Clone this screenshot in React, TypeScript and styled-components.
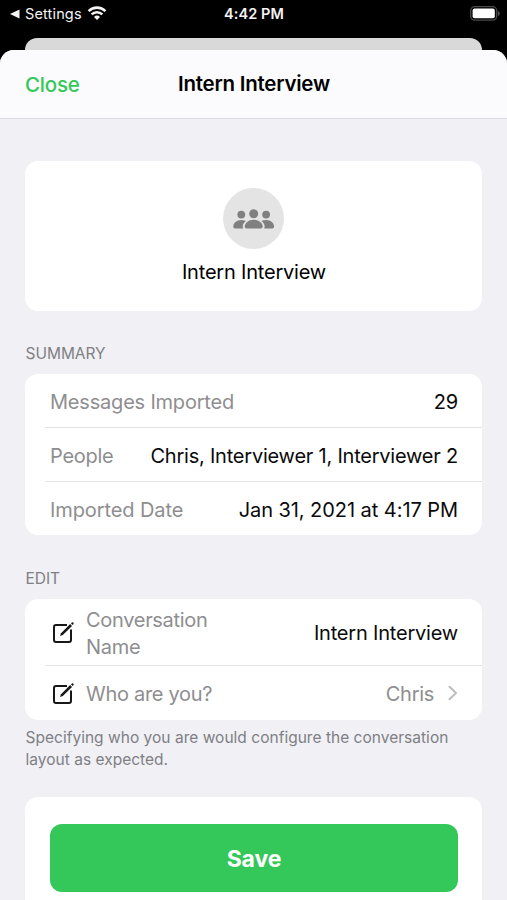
import React from "react";
import styled, { createGlobalStyle } from "styled-components";

const GlobalStyle = createGlobalStyle`
  * { box-sizing: border-box; }
  html, body { margin: 0; background: #000; overflow: hidden; }
  body { font-family: Inter, "Liberation Sans", sans-serif; }
`;

const Screen = styled.div`
  width: 507px;
  height: 900px;
  overflow: hidden;
  display: flex;
  flex-direction: column;
  background: #000;
`;

const StatusBar = styled.header`
  flex: none;
  height: 38px;
  padding: 0 7px 10px 10px;
  display: grid;
  grid-template-columns: 1fr auto 1fr;
  align-items: center;
  color: #f4f4f4;
`;

const BackLink = styled.div`
  display: flex;
  align-items: center;
  font-size: 14.5px;
  line-height: 28px;
  letter-spacing: 0.15px;
  svg:first-child { margin-right: 5px; }
  svg:last-child { margin-left: 5px; margin-top: -2px; }
`;

const Clock = styled.div`
  padding-right: 2px;
  font-size: 14.5px;
  font-weight: 600;
  line-height: 28px;
  letter-spacing: 0.1px;
`;

const BatterySlot = styled.div`
  display: flex;
  justify-content: flex-end;
  margin-top: -1px;
`;

const BackingCard = styled.div`
  flex: none;
  height: 12px;
  margin: 0 25px;
  border-radius: 12px 12px 0 0;
  background: #d9d9d9;
`;

const Sheet = styled.main`
  flex: 1;
  min-height: 0;
  overflow: hidden;
  border-radius: 14px 14px 0 0;
  background: #f0f0f5;
`;

const NavBar = styled.nav`
  height: 69px;
  padding: 0 24px 0 25px;
  display: grid;
  grid-template-columns: 1fr auto 1fr;
  align-items: center;
  background: #fbfbfd;
  border-bottom: 1px solid #dcdce0;
`;

const CloseButton = styled.button`
  justify-self: start;
  padding: 0;
  border: 0;
  background: none;
  color: #34c759;
  font: 500 20.5px Inter, sans-serif;
  letter-spacing: -0.2px;
`;

const Title = styled.h1`
  margin: 0;
  padding-bottom: 1px;
  font-size: 20.5px;
  font-weight: 600;
  letter-spacing: -0.24px;
`;

const Content = styled.div`
  padding: 42px 25px 0;
`;

const Card = styled.section`
  border-radius: 13px;
  background: #fff;
`;

const ProfileCard = styled(Card)`
  height: 150px;
  padding-top: 27px;
  display: flex;
  flex-direction: column;
  align-items: center;
`;

const Avatar = styled.div`
  width: 61px;
  height: 61px;
  border-radius: 50%;
  display: flex;
  align-items: center;
  justify-content: center;
  background: #e4e4e4;
`;

const ProfileName = styled.div`
  margin-top: 9px;
  padding-left: 1px;
  font-size: 20px;
  line-height: 28px;
  letter-spacing: -0.2px;
`;

const SectionLabel = styled.h2<{ $top: number }>`
  margin: ${(p) => p.$top}px 0 10px;
  padding-left: 0.5px;
  font-size: 15.5px;
  line-height: 20px;
  font-weight: 400;
  letter-spacing: -0.03px;
  color: #7f7f84;
`;

const Row = styled.div<{ $height: number; $divided?: boolean; $drop?: number }>`
  height: ${(p) => p.$height}px;
  margin-left: 20px;
  padding: ${(p) => p.$drop ?? 3}px 24px 0 5px;
  display: flex;
  align-items: center;
  border-bottom: ${(p) => (p.$divided ? "1px solid #e3e3e5" : "0")};
  svg { flex: none; }
`;

const Label = styled.span<{ $tracking?: number; $width?: number }>`
  width: ${(p) => (p.$width ? `${p.$width}px` : "auto")};
  font-size: 20px;
  line-height: 27px;
  letter-spacing: ${(p) => p.$tracking ?? -0.2}px;
  color: #8e8e90;
`;

const Value = styled.span<{ $tracking?: number; $muted?: boolean }>`
  margin-left: auto;
  white-space: nowrap;
  font-size: 20px;
  line-height: 27px;
  letter-spacing: ${(p) => p.$tracking ?? -0.2}px;
  color: ${(p) => (p.$muted ? "#8e8e90" : "#0a0a0a")};
`;

const EditSlot = styled.span`
  display: flex;
  width: 36px;
  padding-left: 2px;
  margin-top: -2px;
`;

const ChevronSlot = styled.span`
  display: flex;
  margin: -2px 0 0 14px;
`;

const Note = styled.p`
  margin: 7px 0 0;
  padding-left: 0.5px;
  font-size: 15.5px;
  line-height: 22px;
  letter-spacing: 0.02px;
  color: #7f7f84;
`;

const SaveCard = styled(Card)`
  margin-top: 26px;
  height: 122px;
  padding: 27px 24px 0 25px;
`;

const SaveButton = styled.button`
  display: block;
  width: 100%;
  height: 68px;
  padding: 1px 0 0;
  border: 0;
  border-radius: 12px;
  background: #34c759;
  color: #fff;
  font: 700 23px Inter, sans-serif;
  letter-spacing: -0.1px;
`;

const WifiIcon = () => (
  <svg width="20" height="16" viewBox="0 0 20 16" fill="none" stroke="#f4f4f4" strokeWidth="2.6">
    <path d="M1.6 6.1a12 12 0 0 1 16.8 0" />
    <path d="M4.7 9.4a7.5 7.500 0 0 1 10.6 0" />
    <path d="M10 15l-3-3.1a4.300 4.300 0 0 1 6 0z" fill="#f4f4f4" stroke="none" />
  </svg>
);

const BatteryIcon = () => (
  <svg width="30" height="15" viewBox="0 0 30 15" fill="none">
    <rect x="0.7" y="0.7" width="26" height="13.4" rx="4" stroke="#4a4a4a" strokeWidth="1.3" />
    <rect x="2.6" y="2.6" width="22.2" height="9.6" rx="2" fill="#fff" />
    <path d="M28 5v5c1-.4 1.7-1.4 1.7-2.5S29 5.4 28 5z" fill="#555" />
  </svg>
);

const PeopleIcon = () => (
  <svg width="42" height="20" viewBox="0 0 42 20" fill="#808080">
    <circle cx="8.3" cy="5.6" r="3.9" />
    <circle cx="33.1" cy="5.6" r="3.9" />
    <circle cx="20.7" cy="4.7" r="4.5" />
    <path d="M12.9 11.9C11.500 11.300 9.900 11 8.200 11 3.500 11 .3 14.100.3 17.500c0 1.300.5 1.900 1.700 1.900h8.200c-1.200-2.400-.2-5.400 2.700-7.500z" />
    <path d="M28.500 11.900c1.400-.6 3-.9 4.700-.9 4.700 0 7.900 3.100 7.900 6.500 0 1.300-.5 1.900-1.700 1.900h-8.200c1.200-2.400.2-5.400-2.700-7.500z" />
    <path d="M20.700 10.700c-5.400 0-9 3.600-9 6.800 0 1.300.7 1.900 2 1.900h14c1.300 0 2-.6 2-1.900 0-3.200-3.600-6.800-9-6.800z" />
  </svg>
);

const EditIcon = () => (
  <svg width="23" height="23" viewBox="0 0 23 23" fill="none" stroke="#171717" strokeWidth="2">
    <path d="M15 4H4a2 2 0 0 0-2 2v13a2 2 0 0 0 2 2h13a2 2 0 0 0 2-2V8.500" />
    <path d="M8 15l1-2.800 9.200-9.100 1.800 1.800-9.200 9.100z" fill="#171717" stroke="none" />
    <path d="M19 2.400l.9-.9c.9-.7 2.300.6 1.600 1.600l-.8.900z" fill="#171717" stroke="none" />
  </svg>
);

const Chevron = () => (
  <svg width="10" height="16" viewBox="0 0 10 16" fill="none" stroke="#bdbdc0" strokeWidth="2">
    <path d="M1.5 1.8L8 8l-6.500 6.200" strokeLinecap="round" strokeLinejoin="round" />
  </svg>
);

export default function App() {
  return (
    <>
      <GlobalStyle />
      <Screen>
        <StatusBar>
          <BackLink>
            <svg width="10" height="10" viewBox="0 0 10 10">
              <path d="M0 5l9.500-4.600v9.200z" fill="#f4f4f4" />
            </svg>
            Settings
            <WifiIcon />
          </BackLink>
          <Clock>4:42 PM</Clock>
          <BatterySlot>
            <BatteryIcon />
          </BatterySlot>
        </StatusBar>
        <BackingCard />
        <Sheet>
          <NavBar>
            <CloseButton>Close</CloseButton>
            <Title>Intern Interview</Title>
          </NavBar>
          <Content>
            <ProfileCard>
              <Avatar>
                <PeopleIcon />
              </Avatar>
              <ProfileName>Intern Interview</ProfileName>
            </ProfileCard>

            <SectionLabel $top={33}>SUMMARY</SectionLabel>
            <Card>
              <Row $height={54} $divided>
                <Label>Messages Imported</Label>
                <Value>29</Value>
              </Row>
              <Row $height={54} $divided>
                <Label $tracking={-0.27}>People</Label>
                <Value $tracking={-0.22}>Chris, Interviewer 1, Interviewer 2</Value>
              </Row>
              <Row $height={53}>
                <Label $tracking={-0.1}>Imported Date</Label>
                <Value $tracking={-0.06}>Jan 31, 2021 at 4:17 PM</Value>
              </Row>
            </Card>

            <SectionLabel $top={34}>EDIT</SectionLabel>
            <Card>
              <Row $height={67} $divided>
                <EditSlot>
                  <EditIcon />
                </EditSlot>
                <Label $width={150} $tracking={-0.3}>Conversation Name</Label>
                <Value $tracking={-0.2}>Intern Interview</Value>
              </Row>
              <Row $height={54} $drop={2}>
                <EditSlot>
                  <EditIcon />
                </EditSlot>
                <Label $tracking={-0.3}>Who are you?</Label>
                <Value $muted $tracking={-0.3}>Chris</Value>
                <ChevronSlot>
                  <Chevron />
                </ChevronSlot>
              </Row>
            </Card>
            <Note>Specifying who you are would configure the conversation layout as expected.</Note>

            <SaveCard>
              <SaveButton>Save</SaveButton>
            </SaveCard>
          </Content>
        </Sheet>
      </Screen>
    </>
  );
}
